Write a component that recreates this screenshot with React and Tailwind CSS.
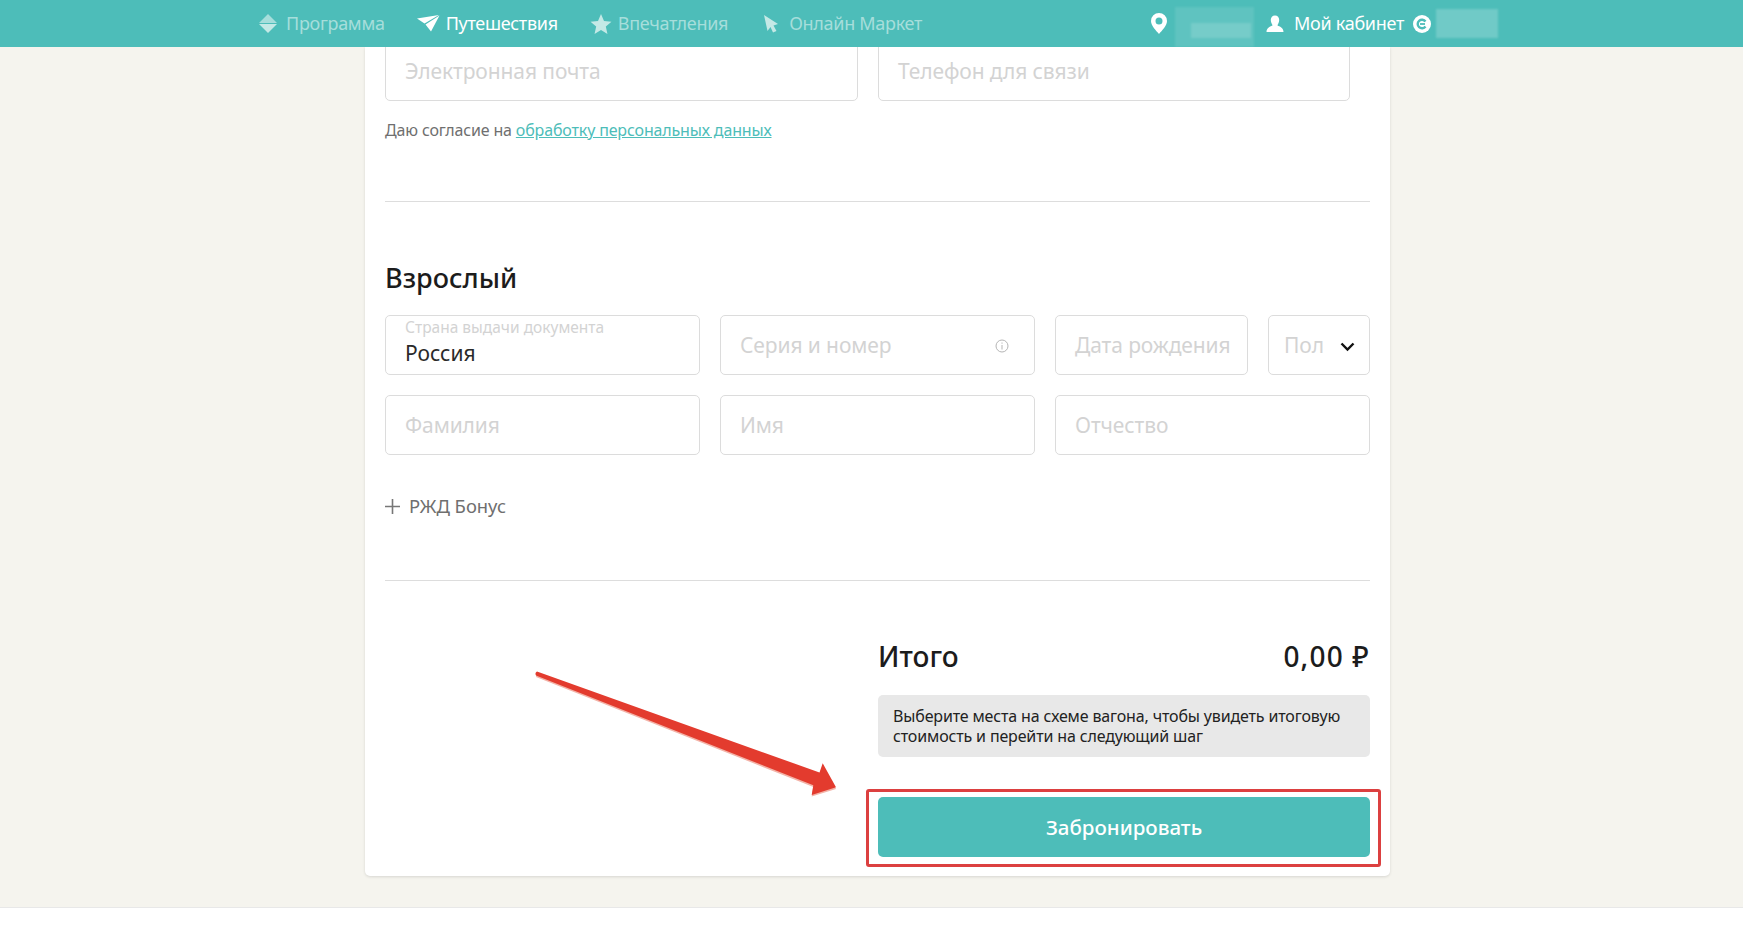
const font = { fontFamily: '"Noto Sans", sans-serif' };

function Field({ label, className = "", children }) {
  return (
    <div className={`h-[60px] bg-white border border-[#dcdcdc] rounded-[5px] flex items-center px-[19px] pt-[1px] text-[21px] tracking-[-0.1px] text-[#d3d3d3] whitespace-nowrap ${className}`}>
      {label}
      {children}
    </div>
  );
}

function NavItem({ icon, label, active, className = "" }) {
  return (
    <div className={`flex items-center ${className} ${active ? "text-white" : "text-[#a6dedb]"}`}>
      {icon}
      <span className="text-[18px] tracking-[-0.3px]">{label}</span>
    </div>
  );
}

export default function App() {
  return (
    <div style={font} className="h-[938px] w-full overflow-hidden flex flex-col bg-[#f5f4ee] relative">
      <header className="h-[47px] shrink-0 bg-[#4dbdb9] relative z-10 flex items-center pl-[258px]">
        <NavItem
          label="Программа"
          className="gap-[8px]"
          icon={<svg width="20" height="21" viewBox="0 0 20 21"><path d="M10 1 19 10H1Z" fill="#a6dedb" /><path d="M1 11H19L10 20Z" fill="#c4e9e6" /></svg>}
        />
        <NavItem
          active
          className="ml-[32px] gap-[6px]"
          label="Путешествия"
          icon={<svg width="23" height="17" viewBox="0 0 23 17"><path d="M0 3.500 22 0 7.500 8.500Z" fill="#fff" /><path d="M8.500 9.500 22.500 .5 14 16.500Z" fill="#fff" /></svg>}
        />
        <NavItem
          className="ml-[32px] gap-[6px]"
          label="Впечатления"
          icon={<svg width="22" height="20" viewBox="0 0 24 22"><path d="M12 0 15.300 7.600 23.500 8.400 17.300 13.800 19.100 22 12 17.700 4.900 22 6.700 13.800.5 8.400 8.700 7.600Z" fill="#c4e9e6" /></svg>}
        />
        <NavItem
          className="ml-[33px] gap-[8px]"
          label="Онлайн Маркет"
          icon={<svg width="20" height="20" viewBox="0 0 20 20"><path d="M3 1 17 10 12.500 11.500 15.500 17 12 18.500 9.500 13 6.500 17Z" fill="#c4e9e6" /></svg>}
        />
        <svg className="ml-[229px]" width="16" height="21" viewBox="0 0 16 21">
          <path fillRule="evenodd" d="M8 0a8 8 0 0 1 8 8c0 4.500-5 9.500-8 13C5 17.500 0 12.500 0 8a8 8 0 0 1 8-8Zm0 4.500a3.500 3.500 0 1 0 0 7 3.500 3.500 0 0 0 0-7Z" fill="#fff" />
        </svg>
        <div className="ml-[8px] h-[40px] w-[79px] self-start mt-[7px] bg-white/10 blur-[1px] relative">
          <div className="absolute left-[16px] top-[16px] w-[60px] h-[15px] bg-white/15" />
        </div>
        <svg className="ml-[12px]" width="18" height="18" viewBox="0 0 18 18">
          <path d="M9 .5c2.600 0 4.200 2 4.200 4.500S11.800 9 11.500 10.500c2 1 6 2 6 6.500H.5c0-4.500 4-5.500 6-6.500C6.200 9 4.800 7.500 4.800 5S6.400.5 9 .5Z" fill="#fff" />
        </svg>
        <span className="ml-[10px] text-[18px] tracking-[-0.3px] text-white">Мой кабинет</span>
        <svg className="ml-[9px]" width="18" height="18" viewBox="0 0 18 18">
          <circle cx="9" cy="9" r="9" fill="#fff" />
          <path d="M12.500 6.500a4.300 4.300 0 1 0 0 5" fill="none" stroke="#4dbdb9" strokeWidth="2.400" />
          <path d="M7 9h5" stroke="#4dbdb9" strokeWidth="1.800" />
        </svg>
        <div className="ml-[5px] h-[29px] w-[62px] bg-white/20 blur-[1px]" />
      </header>

      <main className="w-[1025px] h-[829px] ml-[365px] shrink-0 bg-white rounded-b-[5px] shadow-[0_1px_3px_rgba(0,0,0,0.12)] px-[20px] relative">
        <div className="flex gap-[20px] -mt-[6px]">
          <Field label="Электронная почта" className="w-[473px]" />
          <Field label="Телефон для связи" className="w-[472px]" />
        </div>
        <p className="mt-[19px] text-[16px] tracking-[-0.15px] leading-[20px] text-[#6f6f6f]">
          Даю согласие на <a className="text-[#4dbdb9] underline">обработку персональных данных</a>
        </p>
        <div className="mt-[61px] h-px bg-[#dddddd]" />
        <h2 className="mt-[58px] text-[27px] leading-[36px] font-medium text-[#1c1c1c]">Взрослый</h2>
        <div className="mt-[19px] flex gap-[20px]">
          <div className="w-[315px] h-[60px] border border-[#dcdcdc] rounded-[5px] px-[19px] pt-[2px] whitespace-nowrap">
            <div className="text-[15.5px] leading-[18px] text-[#d3d3d3]">Страна выдачи документа</div>
            <div className="mt-[4px] text-[21px] leading-[27px] text-[#2a2a2a]">Россия</div>
          </div>
          <Field label="Серия и номер" className="w-[315px] justify-between">
            <svg className="mr-[6px]" width="14" height="14" viewBox="0 0 14 14" fill="none" stroke="#b5b5b5" strokeWidth="1">
              <circle cx="7" cy="7" r="6" />
              <path d="M7 6v4.500M7 3.500v1.200" />
            </svg>
          </Field>
          <Field label="Дата рождения" className="w-[193px]" />
          <Field label="Пол" className="w-[102px] !px-[15px] justify-between">
            <svg className="mt-[2px] -mr-[1px]" width="15" height="10" viewBox="0 0 15 10" fill="none" stroke="#111" strokeWidth="2.400">
              <path d="M1.500 1.500 7.500 7.500 13.500 1.500" />
            </svg>
          </Field>
        </div>
        <div className="mt-[20px] flex gap-[20px]">
          <Field label="Фамилия" className="w-[315px]" />
          <Field label="Имя" className="w-[315px]" />
          <Field label="Отчество" className="w-[315px]" />
        </div>
        <div className="mt-[38px] flex items-center gap-[9px] text-[18.4px] leading-[26px] text-[#6f6f6f]">
          <svg width="15" height="15" viewBox="0 0 15 15" stroke="#777" strokeWidth="1.600"><path d="M7.500 0v15M0 7.500h15" /></svg>
          РЖД Бонус
        </div>
        <div className="mt-[61px] h-px bg-[#dddddd]" />
        <div className="ml-[493px] w-[492px]">
          <div className="mt-[57px] flex justify-between text-[28px] leading-[36px] font-medium text-[#1c1c1c]">
            <span>Итого</span>
            <span className="tracking-[1.2px]">0,00 ₽</span>
          </div>
          <div className="mt-[21px] h-[62px] bg-[#e8e8e8] rounded-[5px] px-[15px] py-[11px] text-[16px] tracking-[-0.15px] leading-[20px] text-[#222]">
            Выберите места на схеме вагона, чтобы увидеть итоговую стоимость и перейти на следующий шаг
          </div>
          <div className="mt-[40px] h-[60px] bg-[#4dbdb9] rounded-[5px] flex items-center justify-center text-[20.5px] font-medium text-white">
            Забронировать
          </div>
        </div>
        <div className="absolute left-[501px] top-[742px] w-[515px] h-[78px] border-[3px] border-[#dc4040] rounded-[3px]" />
        <svg className="absolute left-[165px] top-[620px]" width="320" height="132" viewBox="0 0 320 132">
          <path d="M7 6 289.500 107 292.700 98 306 122 281.700 129.500 283.300 120 6 10Z" fill="#f3b3a8" />
          <path d="M7 4.500 289.500 105.500 292.700 96.300 306 120.300 281.700 128 283.300 118.300 6 8.500Q4.500 6 7 4.500Z" fill="#e33b2e" />
        </svg>
      </main>

      <div className="mt-[31px] flex-1 bg-white border-t border-[#e8e8e8]" />
    </div>
  );
}
